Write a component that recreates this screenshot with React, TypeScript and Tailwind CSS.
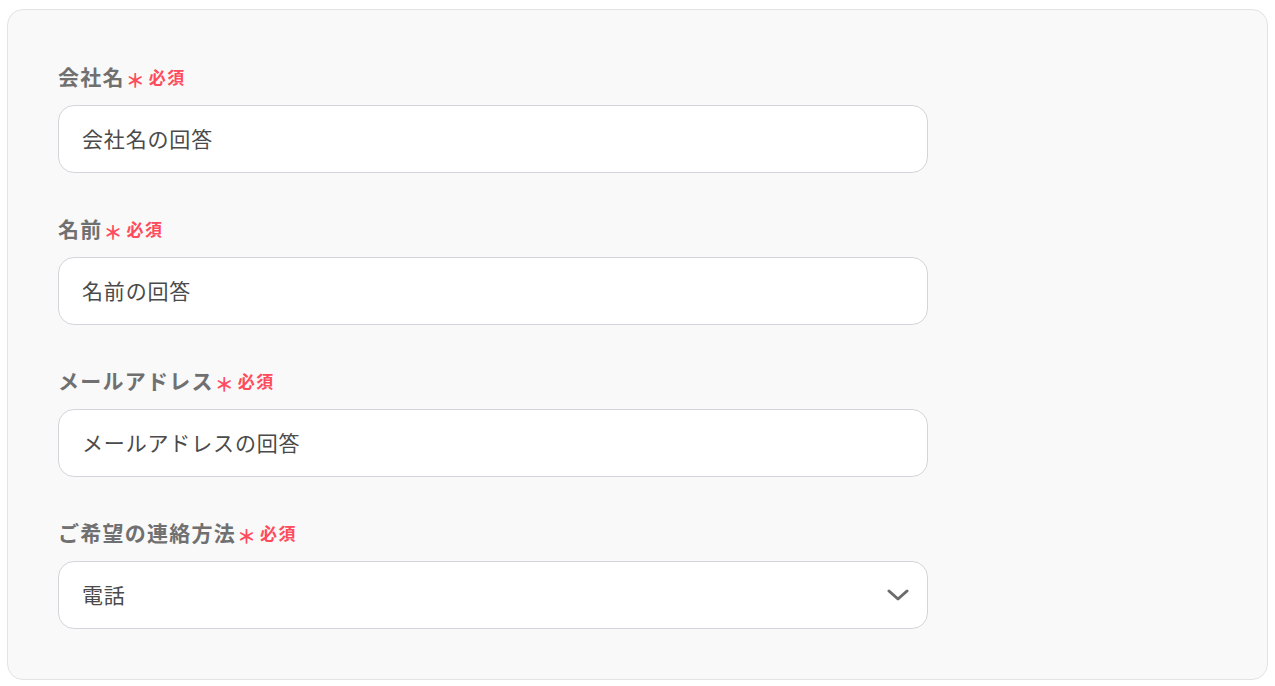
import React from "react";

const fields = [
  { label: "会社名", placeholder: "会社名の回答" },
  { label: "名前", placeholder: "名前の回答" },
  { label: "メールアドレス", placeholder: "メールアドレスの回答" },
];

function Label({ text }: { text: string }) {
  return (
    <div className="flex items-center h-[31px] mb-[13px]">
      <span className="text-[21px] font-bold text-[#707070] tracking-[0.06em] leading-none">{text}</span>
      <span className="text-[19px] font-bold text-[#ff4b5c] leading-none ml-[1px] mt-[6px]">＊</span>
      <span className="text-[17px] font-bold text-[#ff4b5c] tracking-[0.08em] leading-none ml-[4px]">必須</span>
    </div>
  );
}

export default function App() {
  return (
    <div
      className="w-[1275px] h-[686px] bg-white pt-[9px] pl-[7px]"
      style={{ fontFamily: '"Noto Sans CJK JP", "Noto Sans", sans-serif' }}
    >
      <div className="w-[1261px] h-[671px] bg-[#f9f9f9] border border-[#e3e3e3] rounded-[16px] pt-[51px] px-[50px] flex flex-col gap-[40px]">
        {fields.map((f) => (
          <div key={f.label}>
            <Label text={f.label} />
            <div className="w-[870px] h-[68px] bg-white border border-[#d4d5da] rounded-[16px] flex items-center px-[23px]">
              <span className="text-[21px] text-[#4a4a4a] tracking-[0.04em]">{f.placeholder}</span>
            </div>
          </div>
        ))}
        <div>
          <Label text="ご希望の連絡方法" />
          <div className="w-[870px] h-[68px] bg-white border border-[#d4d5da] rounded-[16px] flex items-center justify-between pl-[23px] pr-[18px]">
            <span className="text-[21px] text-[#4a4a4a] tracking-[0.04em]">電話</span>
            <svg width="22" height="14" viewBox="0 0 22 14" fill="none">
              <path d="M2 3 L11 11 L20 3" stroke="#6b6b6b" strokeWidth="3" strokeLinecap="round" strokeLinejoin="round" />
            </svg>
          </div>
        </div>
      </div>
    </div>
  );
}
